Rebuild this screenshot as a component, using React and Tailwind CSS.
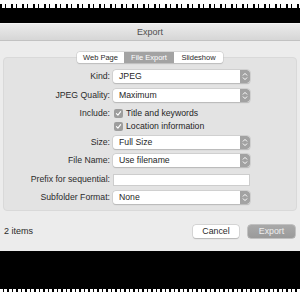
import React from "react";

function Stepper() {
  return (
    <div className="w-[10px] h-full bg-[#a2a2a2] rounded-r-[3px] flex items-center justify-center">
      <svg width="6" height="9" viewBox="0 0 6 9" fill="none" stroke="#ffffff" strokeWidth="1" strokeLinecap="round" strokeLinejoin="round">
        <path d="M1.2 3.2 L3 1.4 L4.8 3.2" />
        <path d="M1.2 5.8 L3 7.6 L4.8 5.8" />
      </svg>
    </div>
  );
}

function Select({ value }) {
  return (
    <div className="h-[13px] w-[137px] bg-white rounded-[3px] shadow-[0_0_0_0.5px_#c4c4c4,0_0.5px_1px_#b0b0b0] flex items-stretch overflow-hidden">
      <div className="flex-1 pl-[6px] flex items-center text-[8.7px] leading-none text-[#262626]">{value}</div>
      <Stepper />
    </div>
  );
}

function Label({ children }) {
  return (
    <div className="w-[106px] text-right text-[8.7px] leading-none text-[#2b2b2b]">{children}</div>
  );
}

function Row({ label, children, className = "" }) {
  return (
    <div className={"flex items-center h-[13px] " + className}>
      <Label>{label}</Label>
      <div className="ml-[3px] w-[137px] flex items-center">{children}</div>
    </div>
  );
}

function Check({ text }) {
  return (
    <div className="flex items-center">
      <div className="ml-[1px] w-[9px] h-[9px] bg-[#9d9d9d] rounded-[2px] flex items-center justify-center">
        <svg width="7" height="7" viewBox="0 0 7 7" fill="none" stroke="#ffffff" strokeWidth="1.1" strokeLinecap="round" strokeLinejoin="round">
          <path d="M1.4 3.6 L2.9 5.1 L5.6 1.6" />
        </svg>
      </div>
      <span className="ml-[3px] text-[8.7px] leading-none text-[#262626] whitespace-nowrap">{text}</span>
    </div>
  );
}

export default function App() {
  return (
    <div className="w-[300px] h-[300px] bg-black flex flex-col overflow-hidden font-['Liberation_Sans',Arial,sans-serif]">
      <div className="h-[4px] bg-white" />
      <div className="h-[4px] bg-[repeating-linear-gradient(90deg,#000_0_2px,#fff_2px_5px,#000_5px_6px,#fff_6px_11px)]" />
      <div className="h-[15px]" />
      <div className="h-[228px] bg-[#ececec] flex flex-col">
        <div className="h-[18px] bg-[linear-gradient(#ebebeb,#d6d6d6)] border-t border-[#f4f4f4] border-b border-b-[#c2c2c2] flex items-center justify-center">
          <span className="text-[9px] leading-none text-[#4f4f4f]">Export</span>
        </div>
        <div className="flex-1 flex flex-col px-[3px] pt-[11px]">
          <div className="relative z-10 flex justify-center h-[11px]">
            <div className="flex h-[11px] rounded-[3px] shadow-[0_0_0_0.5px_#c6c6c6,0_0.5px_1px_#b5b5b5] overflow-hidden text-[7.5px] leading-none">
              <div className="w-[47px] bg-white flex items-center justify-center text-[#2a2a2a]">Web Page</div>
              <div className="w-[50px] bg-[#a3a3a3] flex items-center justify-center text-white">File Export</div>
              <div className="w-[49px] bg-white flex items-center justify-center text-[#2a2a2a]">Slideshow</div>
            </div>
          </div>
          <div className="-mt-[6px] h-[154px] border border-[#d9d9d9] rounded-[4px] bg-[#e3e3e3] pt-[12px] flex flex-col">
            <Row label="Kind:">
              <Select value="JPEG" />
            </Row>
            <Row label="JPEG Quality:" className="mt-[6px]">
              <Select value="Maximum" />
            </Row>
            <Row label="Include:" className="mt-[5px]">
              <Check text="Title and keywords" />
            </Row>
            <Row label="">
              <Check text="Location information" />
            </Row>
            <Row label="Size:" className="mt-[3px]">
              <Select value="Full Size" />
            </Row>
            <Row label="File Name:" className="mt-[5px]">
              <Select value="Use filename" />
            </Row>
            <Row label="Prefix for sequential:" className="mt-[6px]">
              <div className="h-[12px] w-[137px] bg-white border border-[#cdcdcd]" />
            </Row>
            <Row label="Subfolder Format:" className="mt-[5px]">
              <Select value="None" />
            </Row>
          </div>
          <div className="flex-1 flex items-center">
            <span className="ml-[1px] text-[9px] leading-none text-[#2a2a2a]">2 items</span>
            <div className="ml-auto mr-[2px] flex items-center gap-[9px]">
              <div className="w-[46px] h-[13px] bg-white rounded-[3px] shadow-[0_0_0_0.5px_#c4c4c4,0_0.5px_1px_#b0b0b0] flex items-center justify-center text-[8.8px] leading-none text-[#2a2a2a]">Cancel</div>
              <div className="w-[47px] h-[13px] bg-[linear-gradient(#a9a9a9,#9a9a9a)] rounded-[3px] shadow-[0_0_0_0.5px_#959595] flex items-center justify-center text-[8.8px] leading-none text-[#eeeeee]">Export</div>
            </div>
          </div>
        </div>
      </div>
      <div className="h-[38px]" />
      <div className="h-[3px] bg-[repeating-linear-gradient(90deg,#fff_0_3px,#000_3px_4px,#fff_4px_7px,#000_7px_9px)]" />
      <div className="flex-1 bg-white" />
    </div>
  );
}
